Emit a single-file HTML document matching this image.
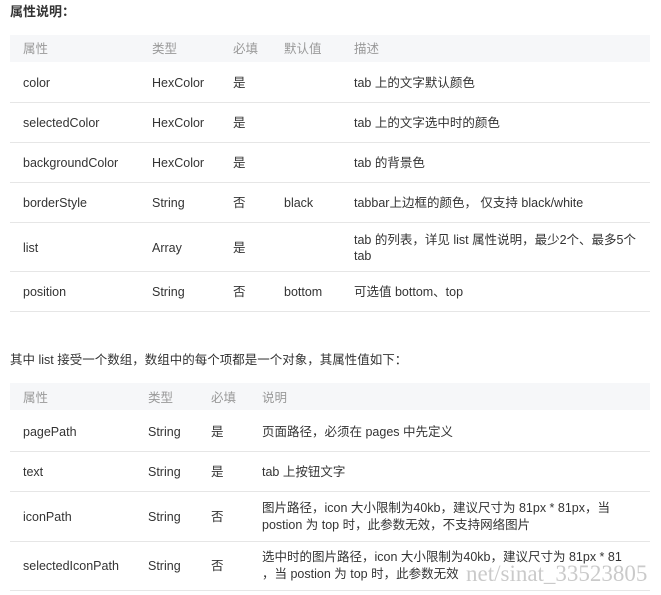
<html><head><style>
body{margin:0;background:#fff;font-family:"Liberation Sans","Noto Sans CJK SC",sans-serif;font-size:12.5px;color:#333;width:661px;height:595px;position:relative;overflow:hidden}
.a{position:absolute;white-space:nowrap;line-height:16px}
.h{position:absolute;left:10px;width:640px;background:#f6f7f9}
.l{position:absolute;left:10px;width:640px;height:1px;background:#e6e6e6}
.g{color:#999}
</style></head><body>
<div class="a" style="left:10px;top:4px;font-weight:bold;font-size:13px">属性说明：</div>
<div class="h" style="top:35px;height:27px"></div>
<div class="a g" style="left:23px;top:41px">属性</div><div class="a g" style="left:152px;top:41px">类型</div><div class="a g" style="left:233px;top:41px">必填</div><div class="a g" style="left:284px;top:41px">默认值</div><div class="a g" style="left:354px;top:41px">描述</div>

<div class="a" style="left:23px;top:75px">color</div><div class="a" style="left:152px;top:75px">HexColor</div><div class="a" style="left:233px;top:75px">是</div><div class="a" style="left:354px;top:75px">tab 上的文字默认颜色</div>
<div class="l" style="top:102px"></div>
<div class="a" style="left:23px;top:115px">selectedColor</div><div class="a" style="left:152px;top:115px">HexColor</div><div class="a" style="left:233px;top:115px">是</div><div class="a" style="left:354px;top:115px">tab 上的文字选中时的颜色</div>
<div class="l" style="top:142px"></div>
<div class="a" style="left:23px;top:155px">backgroundColor</div><div class="a" style="left:152px;top:155px">HexColor</div><div class="a" style="left:233px;top:155px">是</div><div class="a" style="left:354px;top:155px">tab 的背景色</div>
<div class="l" style="top:182px"></div>
<div class="a" style="left:23px;top:195px">borderStyle</div><div class="a" style="left:152px;top:195px">String</div><div class="a" style="left:233px;top:195px">否</div><div class="a" style="left:284px;top:195px">black</div><div class="a" style="left:354px;top:195px">tabbar上边框的颜色， 仅支持 black/white</div>
<div class="l" style="top:222px"></div>
<div class="a" style="left:23px;top:240px">list</div><div class="a" style="left:152px;top:240px">Array</div><div class="a" style="left:233px;top:240px">是</div><div class="a" style="left:354px;top:232px">tab 的列表，详见 list 属性说明，最少2个、最多5个<br>tab</div>
<div class="l" style="top:271px"></div>
<div class="a" style="left:23px;top:284px">position</div><div class="a" style="left:152px;top:284px">String</div><div class="a" style="left:233px;top:284px">否</div><div class="a" style="left:284px;top:284px">bottom</div><div class="a" style="left:354px;top:284px">可选值 bottom、top</div>
<div class="l" style="top:311px"></div>

<div class="a" style="left:10px;top:352px">其中 list 接受一个数组，数组中的每个项都是一个对象，其属性值如下：</div>
<div class="h" style="top:383px;height:27px"></div>
<div class="a g" style="left:23px;top:390px">属性</div><div class="a g" style="left:148px;top:390px">类型</div><div class="a g" style="left:211px;top:390px">必填</div><div class="a g" style="left:262px;top:390px">说明</div>
<div class="a" style="left:23px;top:424px">pagePath</div><div class="a" style="left:148px;top:424px">String</div><div class="a" style="left:211px;top:424px">是</div><div class="a" style="left:262px;top:424px">页面路径，必须在 pages 中先定义</div>
<div class="l" style="top:451px"></div>
<div class="a" style="left:23px;top:464px">text</div><div class="a" style="left:148px;top:464px">String</div><div class="a" style="left:211px;top:464px">是</div><div class="a" style="left:262px;top:464px">tab 上按钮文字</div>
<div class="l" style="top:491px"></div>
<div class="a" style="left:23px;top:509px">iconPath</div><div class="a" style="left:148px;top:509px">String</div><div class="a" style="left:211px;top:509px">否</div><div class="a" style="left:262px;top:500px;line-height:17px">图片路径，icon 大小限制为40kb，建议尺寸为 81px * 81px，当<br>postion 为 top 时，此参数无效，不支持网络图片</div>
<div class="l" style="top:541px"></div>
<div class="a" style="left:23px;top:558px">selectedIconPath</div><div class="a" style="left:148px;top:558px">String</div><div class="a" style="left:211px;top:558px">否</div><div class="a" style="left:262px;top:549px;line-height:17px">选中时的图片路径，icon 大小限制为40kb，建议尺寸为 81px * 81<br>，当 postion 为 top 时，此参数无效</div>
<div class="l" style="top:590px"></div>
<div class="a" style="left:466px;top:562px;font-family:'Liberation Serif',serif;font-size:23px;line-height:24px;color:rgba(150,150,150,0.5)">net/sinat_33523805</div>
</body></html>
